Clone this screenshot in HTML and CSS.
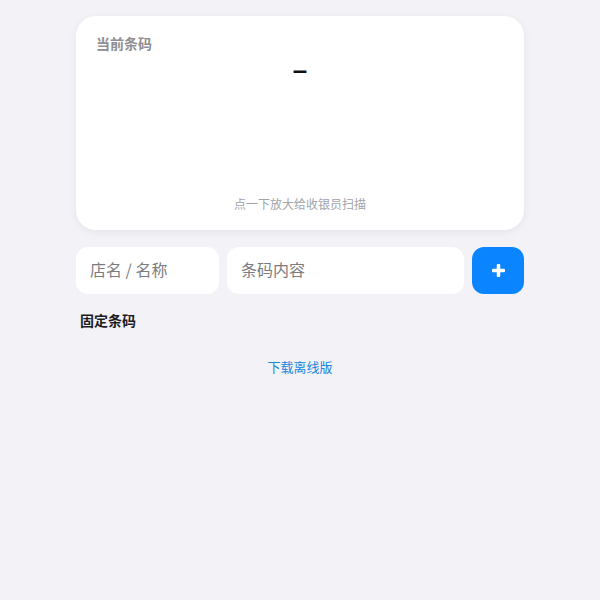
FILE: index.html
```html
<!DOCTYPE html>
<html lang="zh">
<head>
<meta charset="utf-8">
<link rel="stylesheet" href="styles.css">
</head>
<body>
<main class="page">
  <section class="card">
    <div class="card-label">当前条码</div>
    <div class="code-value">–</div>
    <div class="card-hint">点一下放大给收银员扫描</div>
  </section>
  <div class="form-row">
    <input class="field field-name" type="text" placeholder="店名 / 名称">
    <input class="field field-code" type="text" placeholder="条码内容">
    <button class="add-btn" type="button" aria-label="添加">
      <svg width="13" height="13" viewBox="0 0 13 13"><rect x="4.75" y="0" width="3.5" height="13" rx="1" fill="#fff"/><rect x="0" y="4.75" width="13" height="3.5" rx="1" fill="#fff"/></svg>
    </button>
  </div>
  <h2 class="section-title">固定条码</h2>
  <div class="download"><a href="#">下载离线版</a></div>
</main>
</body>
</html>
```

FILE: styles.css
```css
html, body {
  margin: 0;
  padding: 0;
  background: #f2f2f7;
  font-family: "Noto Sans CJK SC", "Noto Sans", sans-serif;
}
.page {
  width: 448px;
  margin: 0 auto;
  padding-top: 16px;
}
.card {
  background: #fff;
  border-radius: 20px;
  height: 214px;
  box-sizing: border-box;
  padding: 17px 20px 18px;
  box-shadow: 0 2px 8px rgba(0,0,0,0.06);
  display: flex;
  flex-direction: column;
}
.card-label {
  font-size: 14px;
  font-weight: 700;
  color: #8e8e93;
  line-height: 20px;
}
.code-value {
  text-align: center;
  font-size: 26px;
  font-weight: 700;
  color: #111;
  line-height: 20px;
  margin-top: 7px;
  flex: 1;
  font-family: "Liberation Sans", Arial, sans-serif;
}
.card-hint {
  text-align: center;
  font-size: 12px;
  color: #a3a3a8;
  line-height: 16px;
}
.form-row {
  display: flex;
  gap: 8px;
  margin-top: 17px;
  height: 47px;
}
.field {
  border: none;
  outline: none;
  background: #fff;
  border-radius: 12px;
  padding: 0 14px 3px;
  font-size: 16px;
  font-family: "Noto Sans CJK SC", "Noto Sans", sans-serif;
  color: #1c1c1e;
  box-sizing: border-box;
  height: 47px;
  min-width: 0;
}
.field::placeholder {
  color: #7c7c80;
}
.field-name { width: 143px; }
.field-code { width: 237px; }
.add-btn {
  width: 52px;
  height: 47px;
  border: none;
  border-radius: 12px;
  background: #0a84ff;
  padding: 0;
  display: flex;
  align-items: center;
  justify-content: center;
}
.section-title {
  margin: 16px 0 0 4px;
  font-size: 14px;
  font-weight: 700;
  color: #1c1c1e;
  line-height: 20px;
}
.download {
  text-align: center;
  margin-top: 27px;
  font-size: 13px;
  line-height: 20px;
}
.download a {
  color: #1b86de;
  text-decoration: none;
}
```
